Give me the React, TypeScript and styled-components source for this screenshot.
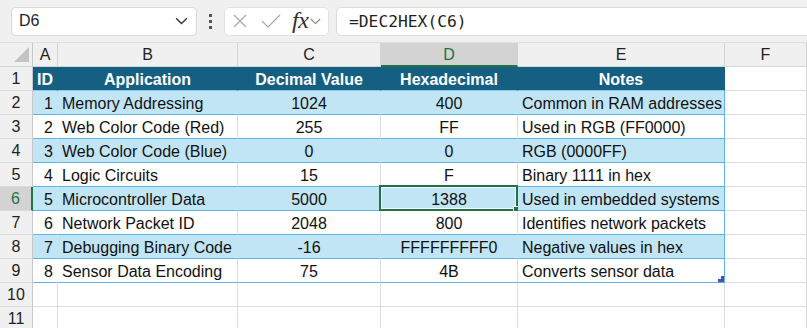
import styled, { createGlobalStyle, css } from "styled-components";

const GlobalStyle = createGlobalStyle`
  html, body {
    margin: 0;
    background: #ffffff;
    font-family: "Liberation Sans", Arial, sans-serif;
    overflow: hidden;
  }
`;

const GREEN = "#217346";
const TABLE_LINE = "#5cb6e3";
const GRID = "#dcdcdc";

type Row = [number, string, number, string, string];

const rows: Row[] = [
  [1, "Memory Addressing", 1024, "400", "Common in RAM addresses"],
  [2, "Web Color Code (Red)", 255, "FF", "Used in RGB (FF0000)"],
  [3, "Web Color Code (Blue)", 0, "0", "RGB (0000FF)"],
  [4, "Logic Circuits", 15, "F", "Binary 1111 in hex"],
  [5, "Microcontroller Data", 5000, "1388", "Used in embedded systems"],
  [6, "Network Packet ID", 2048, "800", "Identifies network packets"],
  [7, "Debugging Binary Code", -16, "FFFFFFFFF0", "Negative values in hex"],
  [8, "Sensor Data Encoding", 75, "4B", "Converts sensor data"],
];

const columns = ["A", "B", "C", "D", "E", "F"];

/* ---------- formula bar ---------- */

const Toolbar = styled.div`
  display: flex;
  align-items: center;
  height: 42px;
  padding-left: 11px;
  background: #f0f0f0;
  border-bottom: 1px solid #e0e0e0;
  overflow: hidden;
  & > * {
    flex: none;
  }
`;

const NameBox = styled.div`
  box-sizing: border-box;
  display: flex;
  align-items: center;
  justify-content: space-between;
  width: 186px;
  height: 29px;
  padding: 0 8px 0 7px;
  background: #fff;
  border: 1px solid #d9d9d9;
  border-radius: 5px;
  font-size: 16px;
  color: #1f1f1f;
`;

const Grip = styled.div`
  display: flex;
  flex-direction: column;
  gap: 3px;
  width: 27px;
  align-items: center;
`;

const GripDot = styled.span`
  width: 3px;
  height: 3px;
  background: #555;
`;

const FxBox = styled.div`
  box-sizing: border-box;
  display: flex;
  align-items: center;
  width: 105px;
  height: 29px;
  padding: 0 2px 0 8px;
  background: #fff;
  border: 1px solid #e2e2e2;
  border-radius: 5px;
`;

const Fx = styled.span`
  font-family: "Liberation Serif", "Times New Roman", serif;
  font-style: italic;
  font-size: 24px;
  line-height: 1;
  color: #303030;
  margin: 0 2px 2px 10px;
  letter-spacing: -0.5px;
`;

const FormulaBox = styled.div`
  box-sizing: border-box;
  display: flex;
  align-items: center;
  width: 490px;
  height: 29px;
  margin-left: 7px;
  padding-left: 12px;
  background: #fff;
  border: 1px solid #dcdcdc;
  border-radius: 5px;
  font-family: "DejaVu Sans Mono", "Liberation Mono", monospace;
  font-size: 16.3px;
  color: #1f1f1f;
`;

/* ---------- grid ---------- */

const Sheet = styled.div`
  display: grid;
  grid-template-columns: 33px 25px 180px 143px 137px 207px 82px;
  grid-auto-rows: 24px;
  font-size: 16px;
  color: #111;
`;

const Corner = styled.div`
  position: relative;
  background: #f0f0f0;
  border-right: 1px solid #c8c8c8;
  border-bottom: 1px solid #d4d4d4;
`;

const CornerMark = styled.span`
  position: absolute;
  right: 3px;
  bottom: 4px;
  width: 0;
  height: 0;
  border-left: 15px solid transparent;
  border-bottom: 15px solid #c4c4c4;
`;

const ColHead = styled.div<{ $selected?: boolean }>`
  display: flex;
  align-items: center;
  justify-content: center;
  padding-top: 1px;
  background: #f0f0f0;
  border-right: 1px solid #d4d4d4;
  border-bottom: 1px solid #d4d4d4;
  color: #222;
  ${(p) =>
    p.$selected &&
    css`
      background: #d3d3d3;
      color: ${GREEN};
      border-bottom: 2px solid ${GREEN};
    `}
`;

const RowHead = styled.div<{ $selected?: boolean }>`
  display: flex;
  align-items: center;
  justify-content: center;
  padding-top: 1px;
  background: #f0f0f0;
  border-right: 1px solid #c8c8c8;
  border-bottom: 1px solid #dadada;
  color: #222;
  ${(p) =>
    p.$selected &&
    css`
      background: #d3d3d3;
      color: ${GREEN};
      border-right: 2px solid ${GREEN};
    `}
`;

type Kind = "head" | "band" | "plain" | "empty";
type Align = "left" | "center" | "right";

const Cell = styled.div<{ $kind: Kind; $align?: Align; $line?: "none" | "grid" | "edge" }>`
  position: relative;
  display: flex;
  align-items: center;
  padding: 2px 4px 0;
  white-space: nowrap;
  justify-content: ${(p) =>
    p.$align === "center" ? "center" : p.$align === "right" ? "flex-end" : "flex-start"};
  border-right: 1px solid
    ${(p) =>
      p.$line === "edge" ? TABLE_LINE : p.$line === "grid" ? GRID : "transparent"};
  border-bottom: 1px solid ${(p) => (p.$kind === "empty" ? GRID : TABLE_LINE)};
  ${(p) =>
    p.$kind === "head" &&
    css`
      background: #156082;
      color: #fff;
      font-weight: bold;
      border-right-color: transparent;
      border-bottom-color: #8cc9e8;
    `}
  ${(p) => p.$kind === "band" && css`background: #c1e5f5;`}
  ${(p) => p.$kind === "plain" && css`background: #fff;`}
  ${(p) => p.$kind === "empty" && css`background: #fff; border-right-color: ${GRID};`}
`;

const Selection = styled.span`
  position: absolute;
  top: -2px;
  left: -2px;
  right: -1px;
  bottom: -1px;
  border: 2px solid ${GREEN};
  box-shadow: inset 0 0 0 1px #fff;
  pointer-events: none;
`;

const FillHandle = styled.span`
  position: absolute;
  right: -5px;
  bottom: -5px;
  width: 6px;
  height: 6px;
  background: ${GREEN};
  border: 1px solid #fff;
`;

const ResizeHandle = styled.svg`
  position: absolute;
  right: 0;
  bottom: 0;
`;

const Chevron = ({ color, w }: { color: string; w: number }) => (
  <svg width={w} height={w * 0.6} viewBox="0 0 12 7">
    <path d="M1 1 L6 6 L11 1" fill="none" stroke={color} strokeWidth="1.3" />
  </svg>
);

const App = () => {
  const headCells = ["ID", "Application", "Decimal Value", "Hexadecimal", "Notes"];
  return (
    <>
      <GlobalStyle />
      <Toolbar>
        <NameBox>
          D6
          <Chevron color="#3a3a3a" w={13} />
        </NameBox>
        <Grip>
          <GripDot />
          <GripDot />
          <GripDot />
        </Grip>
        <FxBox>
          <svg width="14" height="14" viewBox="0 0 14 14">
            <path d="M1 1 L13 13 M13 1 L1 13" stroke="#a8a8a8" strokeWidth="1.2" />
          </svg>
          <svg width="22" height="14" viewBox="0 0 22 14" style={{ marginLeft: 13 }}>
            <path d="M2 7 L8 13 L20 1" fill="none" stroke="#a8a8a8" strokeWidth="1.2" />
          </svg>
          <Fx>fx</Fx>
          <Chevron color="#8a8a8a" w={11} />
        </FxBox>
        <FormulaBox>=DEC2HEX(C6)</FormulaBox>
      </Toolbar>
      <Sheet>
        <Corner>
          <CornerMark />
        </Corner>
        {columns.map((c) => (
          <ColHead key={c} $selected={c === "D"}>
            {c}
          </ColHead>
        ))}

        <RowHead>1</RowHead>
        {headCells.map((h, i) => (
          <Cell key={h} $kind="head" $align={i === 0 ? "left" : "center"} $line={i === 4 ? "edge" : "none"}>
            {h}
          </Cell>
        ))}
        <Cell $kind="empty" $line="grid" />

        {rows.map((r, idx) => {
          const rowNo = idx + 2;
          const kind: Kind = idx % 2 === 0 ? "band" : "plain";
          const inner = kind === "plain" ? "grid" : "none";
          const selected = rowNo === 6;
          return [
            <RowHead key={`h${rowNo}`} $selected={selected}>
              {rowNo}
            </RowHead>,
            <Cell key={`a${rowNo}`} $kind={kind} $align="right" $line="none">
              {r[0]}
            </Cell>,
            <Cell key={`b${rowNo}`} $kind={kind} $line={inner}>
              {r[1]}
            </Cell>,
            <Cell key={`c${rowNo}`} $kind={kind} $align="center" $line={inner}>
              {r[2]}
            </Cell>,
            <Cell key={`d${rowNo}`} $kind={kind} $align="center" $line={inner}>
              {r[3]}
              {selected && (
                <Selection>
                  <FillHandle />
                </Selection>
              )}
            </Cell>,
            <Cell key={`e${rowNo}`} $kind={kind} $line="edge">
              {r[4]}
              {rowNo === 9 && (
                <ResizeHandle width="6" height="6" viewBox="0 0 6 6">
                  <path d="M3 0 H6 V6 H0 V3 H3 Z" fill="#4a50b8" />
                </ResizeHandle>
              )}
            </Cell>,
            <Cell key={`f${rowNo}`} $kind="empty" $line="grid" />,
          ];
        })}

        {[10, 11].map((n) => [
          <RowHead key={`h${n}`}>{n}</RowHead>,
          ...columns.map((c) => <Cell key={`${c}${n}`} $kind="empty" $line="grid" />),
        ])}
      </Sheet>
    </>
  );
};

export default App;
